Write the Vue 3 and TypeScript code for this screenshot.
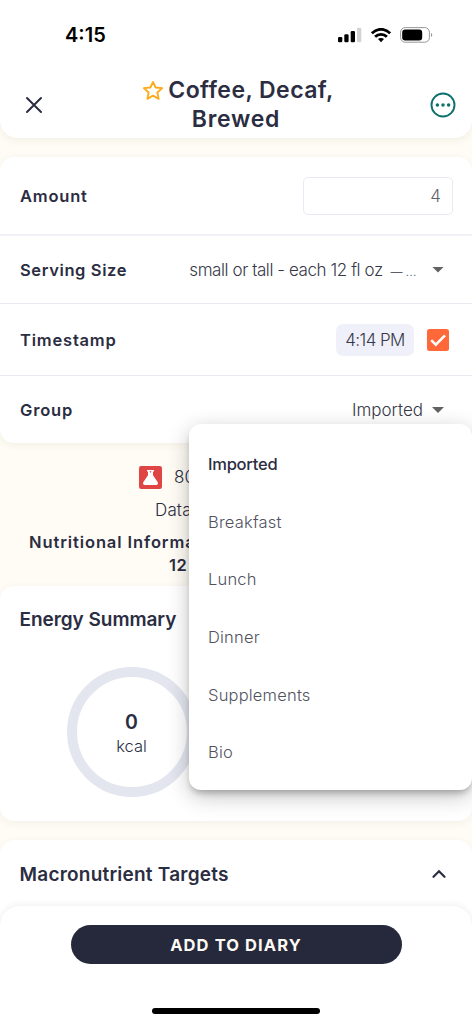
<script setup lang="ts">
import { ref } from 'vue'

const groups: string[] = ['Imported', 'Breakfast', 'Lunch', 'Dinner', 'Supplements', 'Bio']
const selected = ref('Imported')
const timestampOn = ref(true)
</script>

<template>
  <div class="screen">
    <header class="top">
      <div class="status">
        <span class="clock">4:15</span>
        <div class="status-icons">
          <svg class="signal" width="24" height="16" viewBox="0 0 24 16">
            <rect x="0" y="10" width="4.3" height="5.3" rx="1.2" />
            <rect x="6.3" y="7.2" width="4.3" height="8.1" rx="1.2" />
            <rect x="12.7" y="4" width="4.3" height="11.3" rx="1.2" />
            <rect x="19" y="0.7" width="4.3" height="14.6" rx="1.2" fill="#d2d2d2" />
          </svg>
          <svg class="wifi" width="20" height="15" viewBox="0 0 20 15" fill="none" stroke="#000" stroke-width="2.8">
            <path d="M0.9 5.4C6 -0.1 14 -0.1 19.1 5.4" />
            <path d="M4.1 8.8C7.4 5.5 12.6 5.5 15.9 8.8" />
            <path d="M7 11.1C8.8 9.5 11.2 9.5 13 11.1L10 14.3Z" fill="#000" stroke="none" />
          </svg>
          <svg class="battery" width="33" height="16" viewBox="0 0 33 16">
            <rect x="0.6" y="0.6" width="28.8" height="14.6" rx="4.6" fill="none" stroke="#979797" />
            <rect x="2.2" y="2.4" width="20" height="11" rx="3" />
            <path d="M31 5.7c1.7.7 1.7 3.7 0 4.4z" fill="#979797" />
          </svg>
        </div>
      </div>
      <div class="title-row">
        <svg class="close" width="18" height="18" viewBox="0 0 18 18">
          <path d="M2 2L16 16M16 2L2 16" stroke="#2b2d42" stroke-width="2" stroke-linecap="round" />
        </svg>
        <h1>
          <span class="line first">
            <svg class="star" width="22" height="21" viewBox="0 0 22 21">
              <path d="M11 2L13.6 7.5L20.2 8.1L15.3 12.5L16.7 18.9L11 15.6L5.3 18.9L6.7 12.5L1.8 8.1L8.4 7.5Z" fill="none" stroke="#fbaa19" stroke-width="1.8" stroke-linejoin="round" />
            </svg><span class="t1">Coffee, Decaf,</span>
          </span>
          <span class="line"><span class="t2">Brewed</span></span>
        </h1>
        <svg class="more" width="26" height="26" viewBox="0 0 26 26">
          <circle cx="13" cy="13" r="11.5" fill="none" stroke="#0c706c" stroke-width="1.9" />
          <g fill="#0c706c">
            <circle cx="7.4" cy="13" r="1.75" /><circle cx="13" cy="13" r="1.75" /><circle cx="18.6" cy="13" r="1.75" />
          </g>
        </svg>
      </div>
    </header>

    <section class="card details">
      <div class="row amount">
        <span class="label l-amount">Amount</span>
        <div class="field">4</div>
      </div>
      <div class="row serving">
        <span class="label l-serving">Serving Size</span>
        <span class="value"><span class="v-serving">small or tall - each 12 fl oz&nbsp; <span class="dash">—</span> <span class="dots">…</span></span><i class="caret"></i></span>
      </div>
      <div class="row time">
        <span class="label l-time">Timestamp</span>
        <span class="value">
          <span class="pill">4:14 PM</span>
          <span class="check" @click="timestampOn = !timestampOn">
            <svg v-if="timestampOn" width="22" height="22" viewBox="0 0 22 22">
              <path d="M4.2 11.2L8.8 15.7L18 6.3" fill="none" stroke="#fff" stroke-width="2.5" />
            </svg>
          </span>
        </span>
      </div>
      <div class="row group">
        <span class="label l-group">Group</span>
        <span class="value"><span class="v-group">{{ selected }}</span><i class="caret"></i></span>
      </div>
    </section>

    <section class="info">
      <div class="source">
        <svg width="23" height="23" viewBox="0 0 23 23">
          <rect width="23" height="23" rx="2.2" fill="#e04545" />
          <path d="M8 4.1h7v1.4h-1v3.8l4.6 6.7c.9 1.5.2 3-1.5 3H5.9c-1.7 0-2.4-1.5-1.5-3L9 9.3V5.5H8z" fill="#fff" />
          <path d="M10.5 5.2h2L11.5 7z" fill="#e04545" />
        </svg>
        <span>80</span>
      </div>
      <div class="data">Data</div>
      <div class="nutri">Nutritional Information</div>
      <div class="nutri second">12</div>
    </section>

    <section class="card energy">
      <h2 class="h-energy">Energy Summary</h2>
      <div class="ring"><b>0</b><span>kcal</span></div>
    </section>

    <section class="card macro">
      <h2 class="h-macro">Macronutrient Targets</h2>
      <svg width="14" height="10" viewBox="0 0 14 10">
        <path d="M1.5 7.8L7 2.3L12.5 7.8" fill="none" stroke="#2b2d42" stroke-width="2.2" stroke-linecap="round" />
      </svg>
    </section>

    <ul class="menu">
      <li v-for="g in groups" :key="g" :class="{ active: g === selected }" @click="selected = g">{{ g }}</li>
    </ul>

    <footer class="bottom">
      <button type="button"><span>ADD TO DIARY</span></button>
      <div class="home"></div>
    </footer>
  </div>
</template>

<style>
body { background: #fffcf5; }
</style>

<style scoped>
* { box-sizing: border-box; margin: 0; }
.screen {
  position: relative;
  width: 472px;
  height: 1024px;
  overflow: hidden;
  display: flex;
  flex-direction: column;
  background: #fffcf5;
  color: #2b2d42;
  font-family: Inter, "Liberation Sans", sans-serif;
  font-size: 17px;
  white-space: nowrap;
}
svg { display: block; flex: none; }
.top {
  flex: none;
  height: 138px;
  background: #fff;
  border-radius: 0 0 18px 18px;
  box-shadow: 0 2px 8px rgba(60, 50, 30, 0.07);
}
.status {
  height: 70px;
  display: flex;
  justify-content: space-between;
  align-items: center;
  padding: 0 39px 0 65px;
}
.clock { color: #000; font-size: 20px; font-weight: 600; }
.status-icons { display: flex; align-items: center; }
.wifi { margin-left: 9px; }
.battery { margin-left: 9px; }
.title-row {
  height: 69px;
  display: grid;
  grid-template-columns: 60px 1fr 60px;
  align-items: center;
}
.close { margin-left: 24.5px; }
.more { margin-left: 18px; }
h1 { font-size: 23px; font-weight: 600; line-height: 29px; height: 58px; }
.line { display: flex; justify-content: center; align-items: center; height: 29px; }
.first { padding-left: 4px; }
.star { margin-right: 4px; }
.t1 { letter-spacing: 0.45px; }
.t2 { letter-spacing: 0.75px; }
.card {
  flex: none;
  background: #fff;
  border-radius: 14px;
  box-shadow: 0 2px 8px rgba(60, 50, 30, 0.06);
}
.details { margin-top: 19px; height: 286px; }
.row {
  display: flex;
  align-items: center;
  justify-content: space-between;
  padding: 0 19px 0 20px;
  border-bottom: 1px solid #e9e9f4;
}
.amount { height: 79px; border-bottom-width: 2px; border-bottom-color: #f1f1f8; }
.serving { height: 68px; }
.time { height: 72px; }
.group { height: 67px; border-bottom: 0; padding-top: 1px; }
.label { font-weight: 600; font-size: 16.5px; letter-spacing: 0.8px; }
.l-serving { letter-spacing: 0.62px; }
.value { display: flex; align-items: center; font-weight: 300; font-size: 17px; color: #373948; }
.field {
  width: 150px;
  height: 38px;
  border: 1.5px solid #e9e9f4;
  border-radius: 5px;
  padding-right: 11px;
  text-align: right;
  line-height: 36px;
  color: #62646c;
  font-weight: 300;
}
.caret {
  width: 12px;
  height: 6px;
  margin: 0 9px 0 16px;
  background: #626262;
  clip-path: polygon(0 0, 100% 0, 50% 100%);
}
.group .caret { margin-left: 9px; }
.v-serving { letter-spacing: -0.42px; }
.dash { font-size: 12px; margin: 0 -1px 0 -1px; }
.dots { font-size: 13px; }
.v-group { letter-spacing: 0; }
.pill {
  width: 78px;
  height: 32px;
  border-radius: 7px;
  background: #f0f0fa;
  line-height: 33px;
  text-align: center;
  letter-spacing: -0.6px;
}
.check {
  width: 22px;
  height: 22px;
  margin: 0 4px 0 13px;
  border-radius: 2.5px;
  background: #ff6939;
}
.info { flex: none; height: 143px; padding-top: 22px; }
.source { display: flex; align-items: center; gap: 12px; padding-left: 139px; height: 24px; font-weight: 300; }
.data { padding-left: 155px; font-weight: 300; line-height: 24px; margin-top: 9px; letter-spacing: 0.15px; }
.nutri { padding-left: 29px; font-weight: 600; font-size: 16.5px; line-height: 23px; margin-top: 9px; letter-spacing: 0.9px; }
.second { margin-top: 0; padding-left: 169px; letter-spacing: 0.6px; }
.energy { height: 235px; padding: 21px 20px 0 19.5px; }
h2 { font-size: 19px; font-weight: 600; line-height: 26px; }
.h-energy { letter-spacing: -0.05px; }
.h-macro { letter-spacing: 0.22px; }
.ring {
  width: 130px;
  height: 130px;
  margin: 34px 0 0 47px;
  border: 10px solid #e3e6ef;
  border-radius: 50%;
  display: flex;
  flex-direction: column;
  align-items: center;
  padding-top: 33px;
}
.ring b { font-size: 19.5px; font-weight: 600; line-height: 24px; }
.ring span { font-size: 16.5px; font-weight: 300; line-height: 25px; }
.macro {
  margin-top: 19px;
  height: 90px;
  padding: 22px 26px 0 19.5px;
  display: flex;
  justify-content: space-between;
  align-items: flex-start;
}
.macro svg { margin-top: 7px; }
.menu {
  position: absolute;
  left: 189px;
  top: 424px;
  width: 283px;
  height: 366px;
  list-style: none;
  padding: 11px 0 0;
  border-radius: 12px;
  background: #fff;
  box-shadow: 0 5px 6px -2px rgba(0, 0, 0, 0.24), 0 6px 22px rgba(0, 0, 0, 0.24);
}
.menu li { height: 57.7px; line-height: 58px; padding-left: 19px; font-weight: 300; font-size: 16.5px; letter-spacing: 0.2px; color: #50525f; }
.menu .active { font-weight: 500; color: #2b2d42; letter-spacing: -0.25px; }
.bottom {
  position: absolute;
  left: 0;
  bottom: 0;
  width: 472px;
  height: 118px;
  padding-top: 19px;
  border-radius: 20px 20px 0 0;
  background: #fff;
  box-shadow: 0 -1px 7px rgba(0, 0, 0, 0.07);
  display: flex;
  flex-direction: column;
  align-items: center;
}
button {
  width: 331px;
  height: 39px;
  border: 0;
  border-radius: 20px;
  background: #25293b;
  color: #fdfaf3;
  font: 700 16.5px Inter, "Liberation Sans", sans-serif;
  letter-spacing: 1.1px;
}
.home { width: 168px; height: 6px; border-radius: 3px; background: #000; margin-top: 44px; }
</style>
